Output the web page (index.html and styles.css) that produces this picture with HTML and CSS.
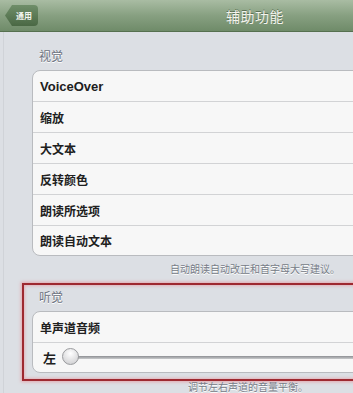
FILE: index.html
```html
<!DOCTYPE html>
<html lang="zh-CN">
<head>
  <meta charset="UTF-8">
  <meta name="viewport" content="width=device-width, initial-scale=1.0">
  <title>辅助功能</title>
  <link rel="stylesheet" href="styles.css">
</head>
<body>
  <div class="navbar">
    <span class="back-btn">通用</span>
    <span class="nav-title">辅助功能</span>
  </div>
  <div class="content">
    <div class="group-label">视觉</div>
    <div class="card">
      <div class="row bold-latin">VoiceOver</div>
      <div class="row">缩放</div>
      <div class="row">大文本</div>
      <div class="row">反转颜色</div>
      <div class="row">朗读所选项</div>
      <div class="row">朗读自动文本</div>
    </div>
    <div class="note note-right">自动朗读自动改正和首字母大写建议。</div>

    <div class="highlight">
      <div class="group-label">听觉</div>
      <div class="card">
        <div class="row">单声道音频</div>
        <div class="row slider-row">
          <span class="slider-label">左</span>
          <div class="slider">
            <span class="knob"></span>
          </div>
        </div>
      </div>
    </div>
    <div class="note note-balance">调节左右声道的音量平衡。</div>
  </div>
</body>
</html>
```

FILE: styles.css
```css
html, body {
  margin: 0;
  width: 353px;
  height: 393px;
  overflow: hidden;
}
body {
  font-family: "Liberation Sans", "Noto Sans CJK SC", sans-serif;
  background-color: #dcdfe4;
  color: #1e1e1e;
}
.navbar {
  display: flex;
  align-items: center;
  height: 32px;
  padding-left: 5px;
  background: linear-gradient(#a9bca3, #87a081 50%, #6f8b69);
  border-bottom: 1px solid #56704f;
  box-sizing: border-box;
}
.back-btn {
  display: flex;
  align-items: center;
  justify-content: center;
  width: 33px;
  height: 21px;
  padding-left: 5px;
  box-sizing: border-box;
  font-family: "Noto Sans CJK SC", sans-serif;
  font-size: 8px;
  font-weight: bold;
  color: #f2f5ef;
  background: linear-gradient(#6f8e69, #4a6844);
  clip-path: polygon(7px 0, 100% 0, 100% 100%, 7px 100%, 0 50%);
  border-radius: 0 4px 4px 0;
}
.nav-title {
  margin-left: 188px;
  font-family: "Noto Sans CJK SC", sans-serif;
  font-size: 14px;
  letter-spacing: 0.5px;
  color: #f4f4ee;
  text-shadow: 0 -1px 0 rgba(60, 80, 55, 0.6);
}
.content {
  padding: 15px 0 0 28px;
  border-left: 1px solid #d0d3d8;
  margin-left: 3px;
}
.group-label {
  padding-left: 7px;
  height: 18px;
  line-height: 18px;
  margin-bottom: 5px;
  font-family: "Noto Sans CJK SC", sans-serif;
  font-size: 12px;
  color: #6c7280;
  text-shadow: 0 1px 0 #fff;
}
.card {
  margin-right: -30px;
  background-color: #f7f7f7;
  border: 1px solid #b9bbbf;
  border-radius: 8px;
}
.row {
  display: flex;
  align-items: center;
  height: 30px;
  padding-left: 7px;
  border-bottom: 1px solid #d2d3d5;
  font-family: "Noto Sans CJK SC", sans-serif;
  font-size: 12px;
  font-weight: bold;
  color: #202020;
}
.row:last-child {
  border-bottom: none;
  height: 29px;
}
.bold-latin {
  font-family: "Liberation Sans", "Noto Sans CJK SC", sans-serif;
  font-size: 13px;
}
.note {
  font-family: "Noto Sans CJK SC", sans-serif;
  font-size: 10px;
  line-height: 12px;
  color: #777c87;
  text-shadow: 0 1px 0 #fff;
}
.note-right {
  margin-top: 7px;
  text-align: right;
  padding-right: 13px;
}
.highlight {
  margin: 8px -30px 0 -10px;
  padding: 3px 0 6px 8px;
  border: 2px solid #9e2930;
  box-shadow: 0 0 3px 1px rgba(235, 120, 130, 0.55), inset 0 0 3px 1px rgba(235, 120, 130, 0.45);
}
.highlight .card {
  margin-right: 0;
}
.slider-row {
  padding-left: 10px;
}
.slider-label {
  font-size: 13px;
}
.slider {
  position: relative;
  flex: 1;
  height: 3px;
  margin-left: 8px;
  background: linear-gradient(#8d8f93, #c9cacc);
  border-radius: 2px;
}
.knob {
  position: absolute;
  left: -2px;
  top: -8px;
  width: 17px;
  height: 17px;
  box-sizing: border-box;
  border-radius: 50%;
  border: 1px solid #9a9b9e;
  background: radial-gradient(circle at 50% 30%, #ffffff, #d9d9db 70%, #c4c5c8);
}
.note-balance {
  margin-top: 0;
  padding-left: 156px;
}
```
